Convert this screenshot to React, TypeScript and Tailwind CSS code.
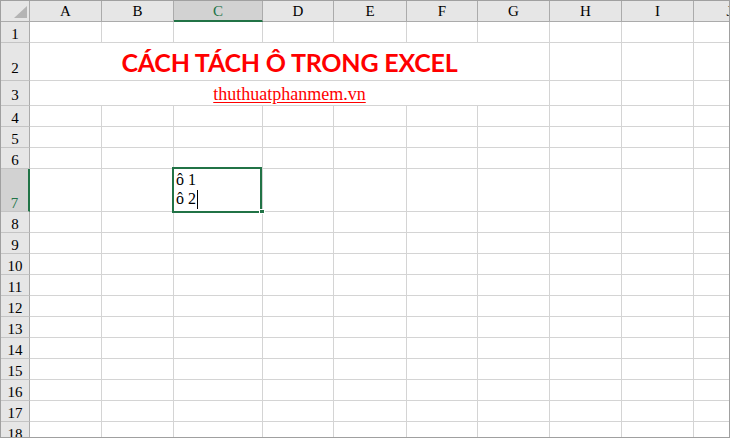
import React from 'react';

const COLS = ['A', 'B', 'C', 'D', 'E', 'F', 'G', 'H', 'I', 'J'];
const ROWS = Array.from({ length: 18 }, (_, i) => i + 1);

// extra bottom padding for the taller rows' labels
const labelPad: Record<number, string> = { 2: 'pb-[4px]', 3: 'pb-[2px]' };

function Corner() {
  return (
    <div className="bg-[#e6e6e6] border-r border-b border-[#ababab] relative">
      <svg width="29" height="21" className="absolute left-0 top-0">
        <polygon points="13,17 26,17 26,5" fill="#b4b4b4" />
      </svg>
    </div>
  );
}

function ColHeader({ name }: { name: string }) {
  const selected = name === 'C';
  return (
    <div
      className={
        selected
          ? 'bg-[#d2d2d2] border-r border-r-[#ababab] border-b-2 border-b-[#217346] text-[#217346] flex items-center justify-center leading-none pt-[1px]'
          : 'bg-[#e6e6e6] border-r border-b border-[#ababab] text-black flex items-center justify-center leading-none'
      }
    >
      {name}
    </div>
  );
}

function RowHeader({ n }: { n: number }) {
  const selected = n === 7;
  return (
    <div
      className={
        (selected
          ? 'bg-[#d2d2d2] border-b border-b-[#c4c4c4] border-r-2 border-r-[#217346] text-[#217346] '
          : 'bg-[#e6e6e6] border-b border-b-[#c4c4c4] border-r border-r-[#ababab] text-black ') +
        'flex items-end justify-center leading-none ' +
        (labelPad[n] ?? '')
      }
    >
      {n}
    </div>
  );
}

function Cell({ children, className = '' }: { children?: React.ReactNode; className?: string }) {
  return <div className={'border-r border-b border-[#d4d4d4] ' + className}>{children}</div>;
}

function SelectedCell() {
  return (
    <Cell className="relative">
      <div className="pl-[2px] pt-[1px] leading-[19px] text-[16px] text-black">
        <div>ô 1</div>
        <div>
          ô 2<span className="inline-block w-px h-[19px] bg-black align-[-5px] ml-[1px]" />
        </div>
      </div>
      {/* selection outline + fill handle */}
      <div className="absolute left-[-2px] top-[-2px] w-[90px] h-[46px] border-2 border-[#217346] pointer-events-none" />
      <div className="absolute left-[85px] top-[40px] w-[6px] h-[5px] bg-[#217346] border border-white pointer-events-none" />
    </Cell>
  );
}

function BodyRow({ n }: { n: number }) {
  if (n === 2) {
    return (
      <>
        <RowHeader n={n} />
        <Cell className="col-span-7 flex items-end justify-center pb-[5px]">
          <span className="font-['Lato','Open_Sans',sans-serif] font-bold text-[25px] tracking-[-0.2px] leading-none text-[#ff0000]">
            CÁCH TÁCH Ô TRONG EXCEL
          </span>
        </Cell>
        <Cell />
        <Cell />
        <Cell />
      </>
    );
  }
  if (n === 3) {
    return (
      <>
        <RowHeader n={n} />
        <Cell className="col-span-7 flex items-end justify-center pb-[2px]">
          <span className="text-[18px] leading-none text-[#ff0000] underline decoration-[#ff0000] underline-offset-[2px]">
            thuthuatphanmem.vn
          </span>
        </Cell>
        <Cell />
        <Cell />
        <Cell />
      </>
    );
  }
  return (
    <>
      <RowHeader n={n} />
      {COLS.map((c) =>
        n === 7 && c === 'C' ? <SelectedCell key={c} /> : <Cell key={c} />
      )}
    </>
  );
}

export default function App() {
  return (
    <div className="w-[730px] h-[438px] overflow-hidden bg-white border border-[#a0a0a0] font-['Liberation_Serif','Times_New_Roman',serif] text-[15px]">
      <div className="grid grid-cols-[29px_72px_72px_89px_71px_73px_71px_72px_72px_72px_72px] grid-rows-[21px_21px_38px_25px_21px_21px_21px_43px_21px_21px_21px_21px_21px_21px_21px_21px_21px_21px_21px] w-[765px]">
        <Corner />
        {COLS.map((c) => (
          <ColHeader key={c} name={c} />
        ))}
        {ROWS.map((n) => (
          <BodyRow key={n} n={n} />
        ))}
      </div>
    </div>
  );
}
